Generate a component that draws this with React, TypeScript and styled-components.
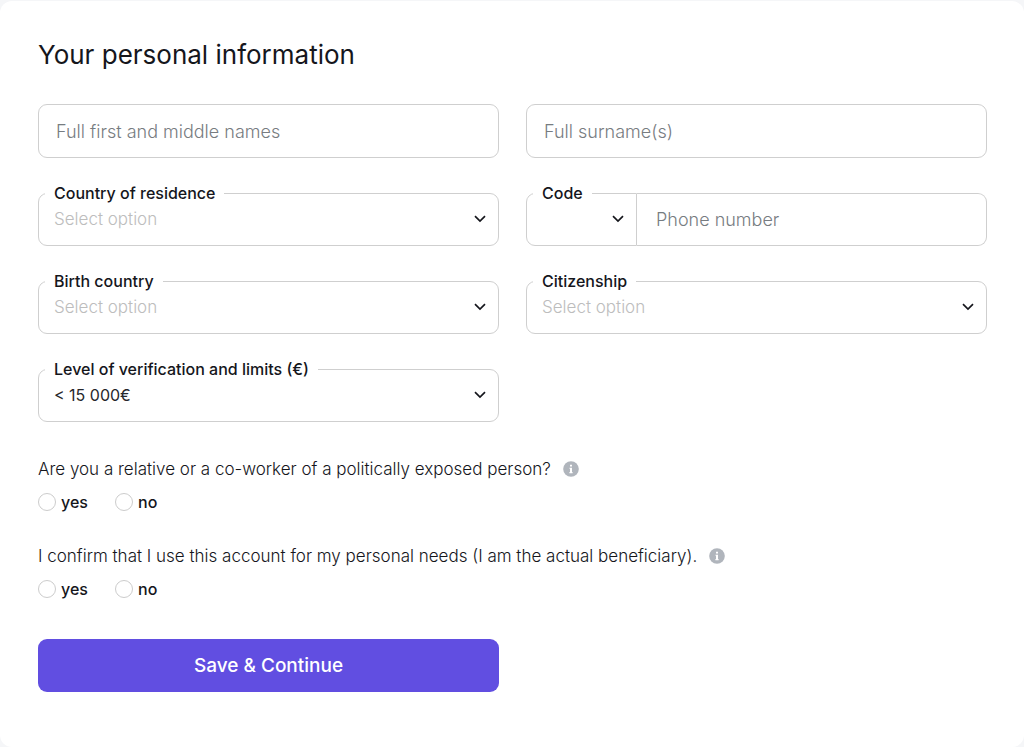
import React, { useId } from "react";
import styled, { createGlobalStyle } from "styled-components";

const GlobalStyle = createGlobalStyle`
  *, *::before, *::after { box-sizing: border-box; }
  body {
    margin: 0;
    background: #f5f6f8;
    color: #15161c;
    font-family: Inter, "Open Sans", sans-serif;
    font-size: 16px;
    line-height: 24px;
  }
  input, select, button { font: inherit; }
`;

const Card = styled.main`
  margin-top: 1px;
  padding: 36px 37px 55px 38px;
  border-radius: 12px;
  background: #fff;
`;

const Title = styled.h1`
  margin: 0 0 31px;
  font-size: 26px;
  font-weight: 400;
  line-height: 36px;
`;

const Fields = styled.div`
  display: grid;
  grid-template-columns: repeat(2, minmax(0, 1fr));
  gap: 25px 27px;
`;

const TextInput = styled.input`
  width: 100%;
  height: 54px;
  padding: 0 17px;
  border: 1px solid #cfcfcf;
  border-radius: 9px;
  background: transparent;
  color: #15161c;
  outline-color: #614ee1;
  font-size: 18px;
  font-weight: 300;
  &::placeholder { color: #777c81; opacity: 1; }
`;

const Outline = styled.fieldset<{ $joined?: boolean }>`
  flex: none;
  width: ${(p) => (p.$joined ? "111px" : "auto")};
  min-width: 0;
  height: 63px;
  margin: 0;
  padding: 0 12px 0 6px;
  border: 1px solid #cfcfcf;
  border-radius: ${(p) => (p.$joined ? "9px 0 0 9px" : "9px")};
`;

const Legend = styled.legend`
  padding: 0 9px;
  font-weight: 500;
  line-height: 20px;
  white-space: nowrap;
`;

const SelectBox = styled.div`
  display: grid;
  align-items: center;
  & > * { grid-area: 1 / 1; }
`;

const Select = styled.select<{ $empty: boolean }>`
  appearance: none;
  width: 100%;
  height: 32px;
  padding: 0 24px 0 9px;
  border: 0;
  outline-color: #614ee1;
  background: transparent;
  color: ${(p) => (p.$empty ? "#bdbdbd" : "#26272c")};
  font-size: ${(p) => (p.$empty ? "17px" : "16px")};
  font-weight: ${(p) => (p.$empty ? 300 : 400)};
`;

const Chevron = styled.svg`
  justify-self: end;
  width: 12px;
  height: 8px;
  pointer-events: none;
`;

const PhoneGroup = styled.div`
  display: flex;
  align-items: flex-end;
`;

const PhoneInput = styled(TextInput)`
  flex: 1;
  min-width: 0;
  height: 53px;
  padding: 0 19px;
  border-left: 0;
  border-radius: 0 9px 9px 0;
`;

const Questions = styled.div`
  display: grid;
  gap: 30px;
  margin: 35px 0 38px;
`;

const Question = styled.div`
  display: grid;
  gap: 9px;
`;

const QuestionText = styled.div`
  display: flex;
  align-items: center;
  gap: 12px;
  font-size: 17px;
  font-weight: 300;
`;

const InfoButton = styled.button`
  display: flex;
  padding: 0;
  border: 0;
  background: none;
`;

const Options = styled.div`
  display: flex;
`;

const Option = styled.label`
  display: flex;
  align-items: center;
  gap: 5px;
  min-width: 77px;
  font-weight: 500;
`;

const Radio = styled.input`
  appearance: none;
  width: 18px;
  height: 18px;
  margin: 0;
  border: 1px solid #cccccc;
  border-radius: 50%;
  background: #fff;
  &:checked { border: 5px solid #614ee1; }
`;

const SubmitRow = styled.div`
  display: grid;
  grid-template-columns: repeat(2, minmax(0, 1fr));
  gap: 27px;
`;

const Submit = styled.button`
  height: 53px;
  border: 0;
  border-radius: 9px;
  background: #614ee1;
  color: #fff;
  font-size: 19px;
  font-weight: 500;
`;

type SelectFieldProps = {
  label: string;
  options: string[];
  empty?: boolean;
  joined?: boolean;
};

function SelectField({ label, options, empty = false, joined }: SelectFieldProps) {
  const id = useId();
  return (
    <Outline $joined={joined}>
      <Legend>
        <label htmlFor={id}>{label}</label>
      </Legend>
      <SelectBox>
        <Select id={id} $empty={empty}>
          {options.map((option) => (
            <option key={option}>{option}</option>
          ))}
        </Select>
        <Chevron viewBox="0 0 12 8" aria-hidden="true">
          <path d="M1 1.200 6 6l5-4.800" fill="none" stroke="#15161c" strokeWidth="1.700" />
        </Chevron>
      </SelectBox>
    </Outline>
  );
}

function YesNoQuestion({ name, text }: { name: string; text: string }) {
  const id = useId();
  return (
    <Question role="radiogroup" aria-labelledby={id}>
      <QuestionText>
        <span id={id}>{text}</span>
        <InfoButton type="button" aria-label="More information">
          <svg width="16" height="16" viewBox="0 0 16 16" aria-hidden="true">
            <circle cx="8" cy="8" r="7.800" fill="#b0b5bc" />
            <path d="M7 3.700h2v1.800H7zM6.500 6.700H9v4.300h.6v1.200H6.400V11H7V7.800h-.5z" fill="#fff" />
          </svg>
        </InfoButton>
      </QuestionText>
      <Options>
        <Option>
          <Radio type="radio" name={name} value="yes" />
          yes
        </Option>
        <Option>
          <Radio type="radio" name={name} value="no" />
          no
        </Option>
      </Options>
    </Question>
  );
}

export default function App() {
  return (
    <>
      <GlobalStyle />
      <Card>
        <Title>Your personal information</Title>
        <form onSubmit={(event) => event.preventDefault()}>
          <Fields>
            <TextInput aria-label="Full first and middle names" placeholder="Full first and middle names" />
            <TextInput aria-label="Full surname(s)" placeholder="Full surname(s)" />
            <SelectField label="Country of residence" options={["Select option"]} empty />
            <PhoneGroup>
              <SelectField label="Code" options={[""]} empty joined />
              <PhoneInput type="tel" aria-label="Phone number" placeholder="Phone number" />
            </PhoneGroup>
            <SelectField label="Birth country" options={["Select option"]} empty />
            <SelectField label="Citizenship" options={["Select option"]} empty />
            <SelectField label="Level of verification and limits (€)" options={["< 15 000€"]} />
          </Fields>
          <Questions>
            <YesNoQuestion
              name="exposed"
              text="Are you a relative or a co-worker of a politically exposed person?"
            />
            <YesNoQuestion
              name="beneficiary"
              text="I confirm that I use this account for my personal needs (I am the actual beneficiary)."
            />
          </Questions>
          <SubmitRow>
            <Submit type="submit">Save &amp; Continue</Submit>
          </SubmitRow>
        </form>
      </Card>
    </>
  );
}
